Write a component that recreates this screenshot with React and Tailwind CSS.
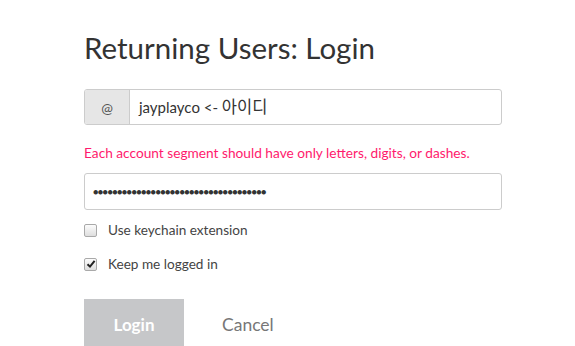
function Checkbox({ checked }) {
  return (
    <span className="w-[13px] h-[13px] rounded-[2px] border border-[#a9a9a9] bg-gradient-to-b from-[#fcfcfc] to-[#dedede] flex items-center justify-center shrink-0">
      {checked && (
        <svg width="10" height="10" viewBox="0 0 10 10">
          <path d="M1.5 5.2 L4 7.6 L8.6 1.8" fill="none" stroke="#222" strokeWidth="2" />
        </svg>
      )}
    </span>
  );
}

export default function App() {
  return (
    <div className="w-[575px] h-[346px] overflow-hidden bg-white" style={{ fontFamily: 'Lato, "Noto Sans CJK KR", sans-serif' }}>
      <div className="pl-[84px] pt-[30px] w-[502px]">
        {/* Title */}
        <h1 className="text-[29.5px] leading-[36px] text-[#333]">Returning Users: Login</h1>

        {/* Account */}
        <div className="mt-[23px] flex h-[36px] border border-[#ccc] rounded-[3px] overflow-hidden">
          <span className="w-[45px] shrink-0 bg-[#e6e6e6] border-r border-[#ccc] flex items-center justify-center text-[14px] text-[#555]">@</span>
          <div className="flex-1 flex items-center pl-[9px] text-[15px] text-[#333]">
            jayplayco &lt;-&nbsp;<span className="text-[16.5px]">아이디</span>
          </div>
        </div>

        {/* Error */}
        <p className="mt-[19px] text-[13.7px] leading-[18px] text-[#ff1a6d]">
          Each account segment should have only letters, digits, or dashes.
        </p>

        {/* Password */}
        <div className="mt-[11px] h-[37px] border border-[#ccc] rounded-[3px] flex items-center pl-[8px]">
          <span className="text-[9px] tracking-[-0.6px] text-[#333]">{'●'.repeat(36)}</span>
        </div>

        {/* Options */}
        <label className="mt-[10px] flex items-center gap-[11px] text-[13.6px] leading-[20px] text-[#444]">
          <Checkbox />
          Use keychain extension
        </label>
        <label className="mt-[14px] flex items-center gap-[11px] text-[13.6px] leading-[20px] text-[#444]">
          <Checkbox checked />
          Keep me logged in
        </label>

        {/* Actions */}
        <div className="mt-[25px] flex items-center">
          <button className="w-[100px] h-[52px] bg-[#c6c7c9] text-white text-[17px] font-bold">Login</button>
          <button className="ml-[38px] text-[17.5px] text-[#777]">Cancel</button>
        </div>
      </div>
    </div>
  );
}
